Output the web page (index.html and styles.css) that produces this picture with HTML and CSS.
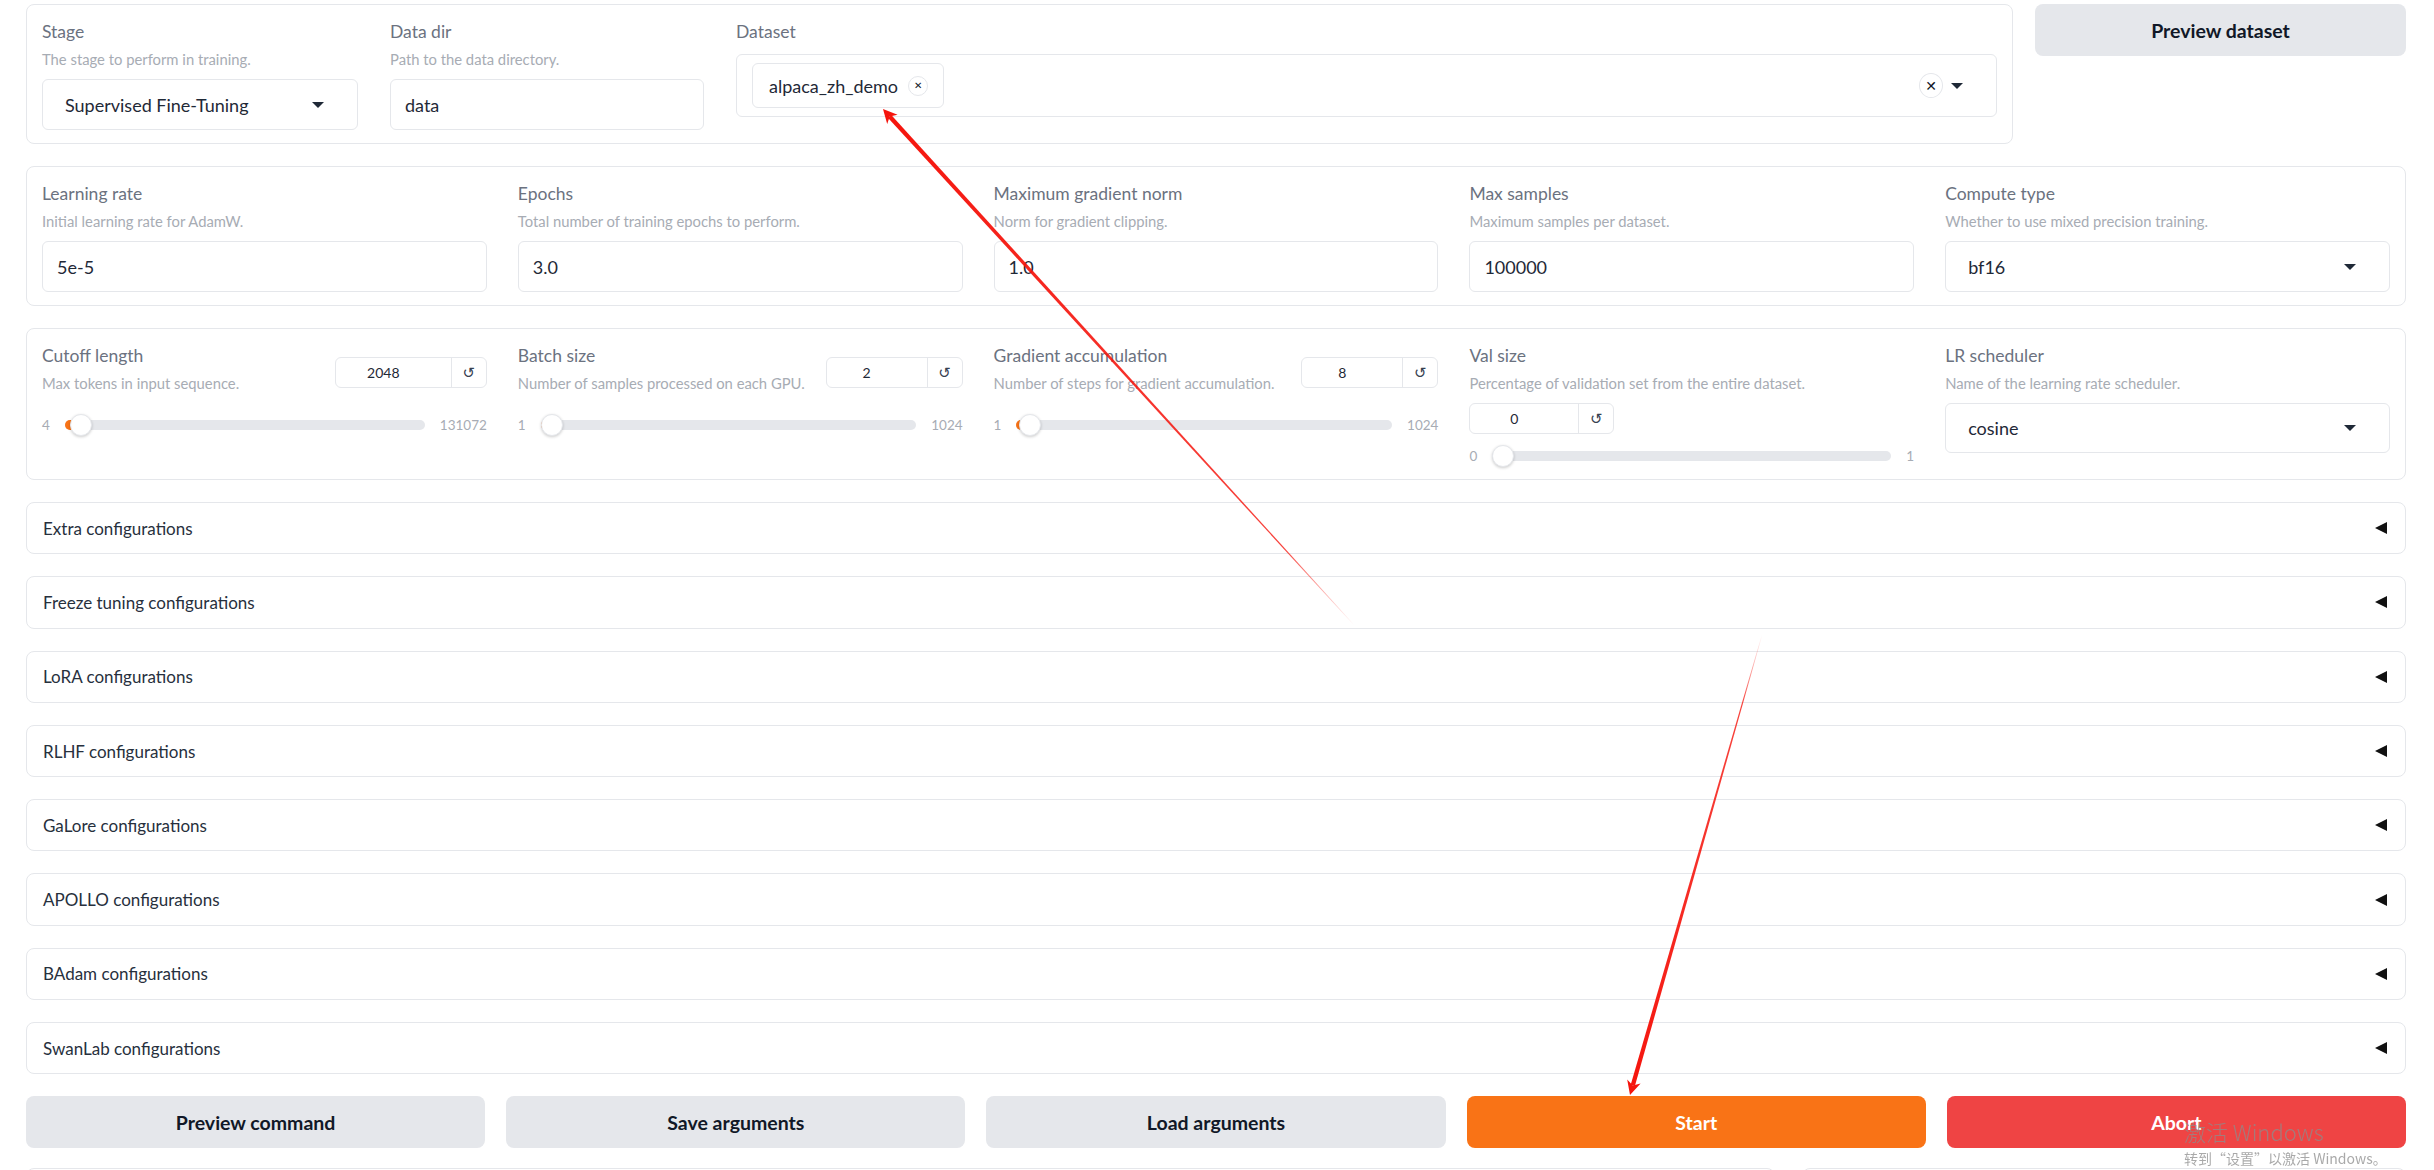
FILE: index.html
```html
<!DOCTYPE html>
<html lang="en">
<head>
    <meta charset="UTF-8">
    <title>Train</title>
    <link rel="stylesheet" href="styles.css">
</head>
<body>
    <div class="page">

        <!-- Data selection -->
        <div class="top-row">
            <div class="block data-panel">
                <div class="field f-stage">
                    <div class="label">Stage</div>
                    <div class="info">The stage to perform in training.</div>
                    <div class="input select">
                        <span>Supervised Fine-Tuning</span>
                        <span class="caret-down"></span>
                    </div>
                </div>
                <div class="field f-dir">
                    <div class="label">Data dir</div>
                    <div class="info">Path to the data directory.</div>
                    <div class="input">data</div>
                </div>
                <div class="field f-dataset">
                    <div class="label">Dataset</div>
                    <div class="multi">
                        <div class="chip">
                            <span>alpaca_zh_demo</span>
                            <span class="chip-x">&#x2715;</span>
                        </div>
                        <div class="multi-tools">
                            <span class="clear-x">&#x2715;</span>
                            <span class="caret-down"></span>
                        </div>
                    </div>
                </div>
            </div>
            <button class="btn preview-btn">Preview dataset</button>
        </div>

        <!-- Basic training arguments -->
        <div class="block grid5">
            <div class="field">
                <div class="label">Learning rate</div>
                <div class="info">Initial learning rate for AdamW.</div>
                <div class="input">5e-5</div>
            </div>
            <div class="field">
                <div class="label">Epochs</div>
                <div class="info">Total number of training epochs to perform.</div>
                <div class="input">3.0</div>
            </div>
            <div class="field">
                <div class="label">Maximum gradient norm</div>
                <div class="info">Norm for gradient clipping.</div>
                <div class="input">1.0</div>
            </div>
            <div class="field">
                <div class="label">Max samples</div>
                <div class="info">Maximum samples per dataset.</div>
                <div class="input">100000</div>
            </div>
            <div class="field">
                <div class="label">Compute type</div>
                <div class="info">Whether to use mixed precision training.</div>
                <div class="input select">
                    <span>bf16</span>
                    <span class="caret-down"></span>
                </div>
            </div>
        </div>

        <!-- Sliders -->
        <div class="block grid5 slider-panel">
            <div class="field">
                <div class="slider-head">
                    <div>
                        <div class="label">Cutoff length</div>
                        <div class="info">Max tokens in input sequence.</div>
                    </div>
                    <div class="num num-wide">
                        <span class="num-val">2048</span>
                        <span class="num-reset">&#x21BA;</span>
                    </div>
                </div>
                <div class="slider">
                    <span>4</span>
                    <div class="track">
                        <div class="fill" style="width: calc((100% - 22px) * 0.0156 + 11px)"></div>
                        <div class="thumb" style="left: calc((100% - 22px) * 0.0156)"></div>
                    </div>
                    <span>131072</span>
                </div>
            </div>
            <div class="field">
                <div class="slider-head">
                    <div>
                        <div class="label">Batch size</div>
                        <div class="info">Number of samples processed on each GPU.</div>
                    </div>
                    <div class="num">
                        <span class="num-val">2</span>
                        <span class="num-reset">&#x21BA;</span>
                    </div>
                </div>
                <div class="slider">
                    <span>1</span>
                    <div class="track">
                        <div class="fill" style="width: calc((100% - 22px) * 0.001 + 11px)"></div>
                        <div class="thumb" style="left: calc((100% - 22px) * 0.001)"></div>
                    </div>
                    <span>1024</span>
                </div>
            </div>
            <div class="field">
                <div class="slider-head">
                    <div>
                        <div class="label">Gradient accumulation</div>
                        <div class="info">Number of steps for gradient accumulation.</div>
                    </div>
                    <div class="num">
                        <span class="num-val">8</span>
                        <span class="num-reset">&#x21BA;</span>
                    </div>
                </div>
                <div class="slider">
                    <span>1</span>
                    <div class="track">
                        <div class="fill" style="width: calc((100% - 22px) * 0.0068 + 11px)"></div>
                        <div class="thumb" style="left: calc((100% - 22px) * 0.0068)"></div>
                    </div>
                    <span>1024</span>
                </div>
            </div>
            <div class="field">
                <div class="label">Val size</div>
                <div class="info">Percentage of validation set from the entire dataset.</div>
                <div class="num num-own">
                    <span class="num-val">0</span>
                    <span class="num-reset">&#x21BA;</span>
                </div>
                <div class="slider slider-tight">
                    <span>0</span>
                    <div class="track">
                        <div class="thumb" style="left: 0"></div>
                    </div>
                    <span>1</span>
                </div>
            </div>
            <div class="field">
                <div class="label">LR scheduler</div>
                <div class="info">Name of the learning rate scheduler.</div>
                <div class="input select select-low">
                    <span>cosine</span>
                    <span class="caret-down"></span>
                </div>
            </div>
        </div>

        <!-- Collapsed groups -->
        <div class="block accordion"><span>Extra configurations</span><span class="caret-left"></span></div>
        <div class="block accordion"><span>Freeze tuning configurations</span><span class="caret-left"></span></div>
        <div class="block accordion"><span>LoRA configurations</span><span class="caret-left"></span></div>
        <div class="block accordion"><span>RLHF configurations</span><span class="caret-left"></span></div>
        <div class="block accordion"><span>GaLore configurations</span><span class="caret-left"></span></div>
        <div class="block accordion"><span>APOLLO configurations</span><span class="caret-left"></span></div>
        <div class="block accordion"><span>BAdam configurations</span><span class="caret-left"></span></div>
        <div class="block accordion"><span>SwanLab configurations</span><span class="caret-left"></span></div>

        <!-- Actions -->
        <div class="actions">
            <button class="btn">Preview command</button>
            <button class="btn">Save arguments</button>
            <button class="btn">Load arguments</button>
            <button class="btn btn-primary">Start</button>
            <button class="btn btn-stop">Abort</button>
        </div>

        <div class="output-row">
            <div class="block out-main"></div>
            <div class="block out-side"></div>
        </div>
    </div>

    <!-- Red annotation arrows drawn over the screenshot -->
    <svg class="annotations" width="2434" height="1170" viewBox="0 0 2434 1170">
        <defs>
            <linearGradient id="fade1" gradientUnits="userSpaceOnUse" x1="1354" y1="625" x2="883" y2="109">
                <stop offset="0" stop-color="#f5140c" stop-opacity="0"/>
                <stop offset="0.15" stop-color="#f5140c" stop-opacity="0.8"/>
                <stop offset="1" stop-color="#f5140c"/>
            </linearGradient>
            <linearGradient id="fade2" gradientUnits="userSpaceOnUse" x1="1762" y1="635" x2="1630" y2="1095">
                <stop offset="0" stop-color="#f5140c" stop-opacity="0"/>
                <stop offset="0.15" stop-color="#f5140c" stop-opacity="0.8"/>
                <stop offset="1" stop-color="#f5140c"/>
            </linearGradient>
        </defs>
        <polygon fill="url(#fade1)" points="1354.2,624.8 891.3,114.9 888.1,117.9 1353.8,625.2"/>
        <polygon fill="#f5140c" points="883,109 897.6,114.7 889.7,116.4 887.2,124.1"/>
        <polygon fill="url(#fade2)" points="1762.3,635.1 1634.9,1086.0 1630.7,1084.8 1761.7,634.9"/>
        <polygon fill="#f5140c" points="1630,1095 1627.2,1079.6 1632.8,1085.4 1640.6,1083.5"/>
    </svg>

    <div class="watermark">
        <div class="wm-title">激活 Windows</div>
        <div class="wm-sub">转到“设置”以激活 Windows。</div>
    </div>
</body>
</html>
```

FILE: styles.css
```css
/* General Styles */
* {
  box-sizing: border-box;
}

body {
  margin: 0;
  background-color: #ffffff;
  font-family: Lato, "Liberation Sans", sans-serif;
  color: #1f2937;
  overflow: hidden;
}

.page {
  display: flex;
  flex-direction: column;
  gap: 22px;
  padding: 4px 28px 0 26px;
}

.block {
  border: 1px solid #e5e7eb;
  border-radius: 8px;
  padding: 15px 15px 13px;
  background-color: #ffffff;
}

/* Labels */
.label {
  font-size: 17.5px;
  line-height: 24px;
  color: #6b7280;
  white-space: nowrap;
}

.info {
  margin-top: 4px;
  font-size: 14.8px;
  line-height: 22px;
  color: #a7acb4;
  white-space: nowrap;
}

/* Inputs */
.input {
  display: flex;
  align-items: center;
  height: 51px;
  margin-top: 9px;
  padding: 0 14px;
  border: 1px solid #e5e7eb;
  border-radius: 6px;
  font-size: 18px;
  color: #1f2937;
}

.select {
  justify-content: space-between;
  padding: 0 33px 0 22px;
}

.select-low {
  height: 50px;
}

.caret-down {
  width: 0;
  height: 0;
  border-left: 6px solid transparent;
  border-right: 6px solid transparent;
  border-top: 6px solid #1f2937;
}

/* Top row */
.top-row {
  display: flex;
  gap: 22px;
  align-items: flex-start;
}

.data-panel {
  flex: 1;
  display: flex;
  gap: 32px;
}

.f-stage {
  flex: 0 0 316px;
}

.f-dir {
  flex: 0 0 314px;
}

.f-dataset {
  flex: 1;
}

.multi {
  display: flex;
  align-items: center;
  height: 63px;
  margin-top: 10px;
  padding: 0 33px 0 15px;
  border: 1px solid #e5e7eb;
  border-radius: 6px;
}

.chip {
  display: flex;
  align-items: center;
  gap: 10px;
  height: 45px;
  padding: 0 15px 0 16px;
  border: 1px solid #e5e7eb;
  border-radius: 6px;
  font-size: 18px;
}

.chip-x {
  display: flex;
  align-items: center;
  justify-content: center;
  width: 20px;
  height: 20px;
  border: 1px solid #e5e7eb;
  border-radius: 50%;
  font-size: 10px;
  font-family: "DejaVu Sans", sans-serif;
  color: #111827;
}

.multi-tools {
  display: flex;
  align-items: center;
  gap: 8px;
  margin-left: auto;
}

.clear-x {
  display: flex;
  align-items: center;
  justify-content: center;
  width: 24px;
  height: 25px;
  border: 1px solid #e5e7eb;
  border-radius: 50%;
  font-size: 14px;
  font-family: "DejaVu Sans", sans-serif;
  color: #111827;
}

/* Buttons */
.btn {
  height: 52px;
  border: none;
  border-radius: 8px;
  background-color: #e5e7eb;
  font-family: Lato, "Liberation Sans", sans-serif;
  font-size: 19.5px;
  font-weight: 700;
  color: #111827;
  cursor: pointer;
}

.preview-btn {
  flex: 0 0 371px;
}

.btn-primary {
  background-color: #f97316;
  color: #ffffff;
}

.btn-stop {
  background-color: #ef4444;
  color: #ffffff;
}

/* Grid rows */
.grid5 {
  display: grid;
  grid-template-columns: repeat(5, 1fr);
  column-gap: 31px;
  align-items: start;
}

.slider-panel {
  padding-bottom: 12px;
}

.slider-head {
  display: flex;
  justify-content: space-between;
  align-items: flex-start;
  gap: 10px;
}

.num {
  display: flex;
  flex-shrink: 0;
  width: 137px;
  height: 31px;
  margin-top: 13px;
  border: 1px solid #e5e7eb;
  border-radius: 6px;
  font-size: 14px;
}

.num-wide {
  width: 152px;
}

.num-own {
  width: 145px;
  margin-top: 9px;
}

.num-val {
  flex: 1;
  padding-right: 20px;
  line-height: 29px;
  text-align: center;
  color: #1f2937;
}

.num-reset {
  display: flex;
  align-items: center;
  justify-content: center;
  width: 35px;
  border-left: 1px solid #e5e7eb;
  font-family: "DejaVu Sans", sans-serif;
  font-size: 15px;
  color: #374151;
}

/* Sliders */
.slider {
  display: flex;
  align-items: center;
  gap: 15px;
  height: 22px;
  margin-top: 20px;
  font-size: 13.5px;
  color: #a7acb4;
}

.slider-tight {
  margin-top: 11px;
}

.track {
  position: relative;
  flex: 1;
  height: 10px;
  border-radius: 5px;
  background-color: #e5e7eb;
}

.fill {
  position: absolute;
  top: 0;
  bottom: 0;
  left: 0;
  border-radius: 5px;
  background-color: #f97316;
}

.thumb {
  position: absolute;
  top: 50%;
  width: 22px;
  height: 22px;
  margin-top: -11px;
  border: 1px solid #e5e7eb;
  border-radius: 50%;
  background-color: #ffffff;
  box-shadow: 0 1px 3px rgba(0, 0, 0, 0.2);
}

/* Accordions */
.accordion {
  display: flex;
  align-items: center;
  justify-content: space-between;
  height: 52.3px;
  padding: 0 18px 0 16px;
  font-size: 17px;
  color: #27303d;
}

.caret-left {
  width: 0;
  height: 0;
  border-top: 6px solid transparent;
  border-bottom: 6px solid transparent;
  border-right: 12px solid #111111;
}

/* Action buttons */
.actions {
  display: grid;
  grid-template-columns: repeat(5, 1fr);
  gap: 21px;
}

.output-row {
  display: flex;
  gap: 27px;
  margin-top: -2px;
}

.out-main {
  flex: 3;
  height: 60px;
}

.out-side {
  flex: 1;
  height: 60px;
}

/* Overlays */
.annotations {
  position: absolute;
  top: 0;
  left: 0;
  pointer-events: none;
}

.watermark {
  position: fixed;
  top: 1116px;
  left: 2184px;
  font-family: "Noto Sans CJK SC", "Noto Sans", sans-serif;
  color: rgba(140, 140, 140, 0.75);
  pointer-events: none;
}

.wm-title {
  font-size: 22px;
  line-height: 30px;
  font-weight: 300;
}

.wm-sub {
  margin-top: 2px;
  font-size: 14px;
  line-height: 20px;
}
```
